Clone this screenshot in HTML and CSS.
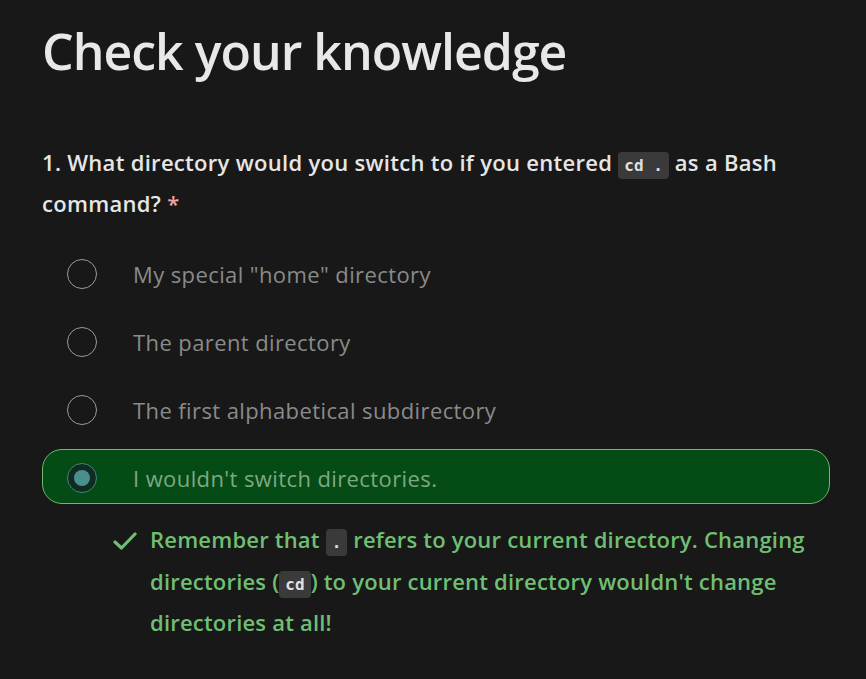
FILE: index.html
```html
<!DOCTYPE html>
<html lang="en">
<head>
<meta charset="utf-8">
<link rel="stylesheet" href="styles.css">
</head>
<body>
<main class="page">
  <h1 class="title">Check your knowledge</h1>
  <section class="question">
    <p class="prompt">1. What directory would you switch to if you entered <code class="code">cd .</code> as a Bash command? <span class="req">*</span></p>
    <div class="options">
      <div class="option"><span class="radio"></span><span class="label">My special "home" directory</span></div>
      <div class="option"><span class="radio"></span><span class="label">The parent directory</span></div>
      <div class="option"><span class="radio"></span><span class="label">The first alphabetical subdirectory</span></div>
      <div class="option selected"><span class="radio checked"></span><span class="label">I wouldn't switch directories.</span></div>
    </div>
    <div class="feedback">
      <svg class="check" width="24" height="20" viewBox="0 0 24 20"><path d="M2 11 L8.5 17 L22 3" fill="none" stroke="#6fbf73" stroke-width="3.2" stroke-linecap="round" stroke-linejoin="round"/></svg>
      <p class="feedback-text">Remember that <code class="code">.</code> refers to your current directory. Changing directories (<code class="code">cd</code>) to your current directory wouldn't change directories at all!</p>
    </div>
  </section>
</main>
</body>
</html>
```
FILE: styles.css
```css
html, body {
  margin: 0;
  padding: 0;
  background: #181818;
}
.page {
  padding: 19px 36px 0 42px;
  font-family: "Open Sans", "Noto Sans", sans-serif;
}
.title {
  margin: 0;
  font-size: 50px;
  font-weight: 600;
  color: #e8e8e8;
  line-height: 64px;
  letter-spacing: -1px;
}
.question {
  margin-top: 59px;
}
.prompt {
  margin: 0;
  font-size: 22px;
  font-weight: 600;
  line-height: 41px;
  color: #e6e6e6;
  letter-spacing: 0.3px;
}
.req {
  color: #f0a0a8;
}
.code {
  font-family: "DejaVu Sans Mono", monospace;
  font-size: 16px;
  font-weight: 700;
  line-height: 1;
  background: #3a3a3a;
  color: #e0e0e0;
  border-radius: 4px;
  padding: 4px 6px;
  letter-spacing: 0;
}
.options {
  margin-top: 21px;
  width: 788px;
  display: flex;
  flex-direction: column;
  gap: 13px;
}
.option {
  display: flex;
  align-items: center;
  height: 55px;
  box-sizing: border-box;
  padding-left: 24px;
  padding-top: 3px;
  border: 1px solid transparent;
  border-radius: 20px;
}
.option.selected {
  background: #054b16;
  border-color: #6cb86c;
}
.radio {
  width: 30px;
  height: 30px;
  box-sizing: border-box;
  border-radius: 50%;
  border: 1.5px solid #9a9a9a;
  flex: none;
  display: flex;
  align-items: center;
  justify-content: center;
}
.radio.checked {
  border: 1.5px solid #3f8585;
  background: #0f2c1f;
}
.radio.checked::after {
  content: "";
  width: 16px;
  height: 16px;
  border-radius: 50%;
  background: #4a8f8f;
}
.label {
  margin-left: 36px;
  font-size: 22px;
  color: #8a8a8a;
  letter-spacing: 0.4px;
}
.selected .label {
  color: #7fa882;
}
.feedback {
  display: flex;
  align-items: flex-start;
  margin-top: 15px;
  padding-left: 71px;
  width: 700px;
}
.check {
  flex: none;
  margin-top: 12px;
  margin-right: 13px;
}
.feedback-text {
  margin: 0;
  font-size: 22px;
  font-weight: 600;
  line-height: 41.5px;
  color: #6fbf73;
  letter-spacing: 0.2px;
}
```
